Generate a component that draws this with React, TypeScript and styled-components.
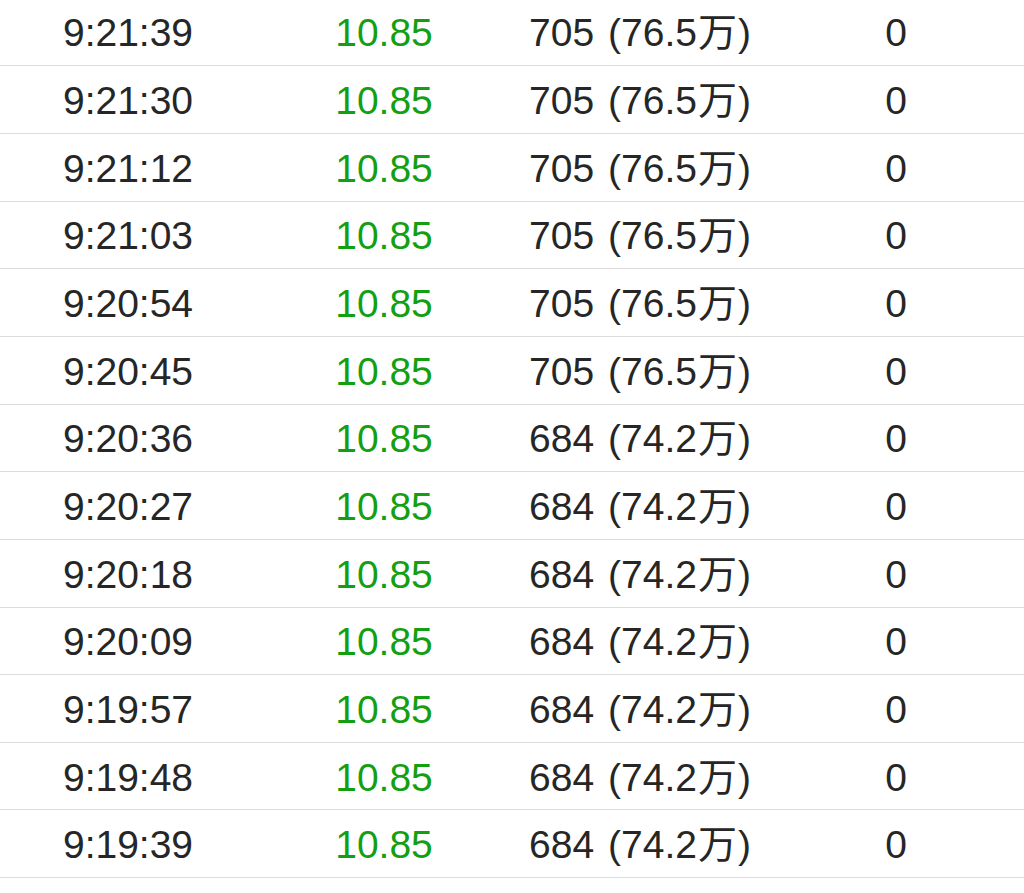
import React from "react";
import styled, { createGlobalStyle } from "styled-components";

const GlobalStyle = createGlobalStyle`
  html, body {
    margin: 0;
    padding: 0;
    background: #ffffff;
  }
  body {
    font-family: "Liberation Sans", "Noto Sans CJK SC", sans-serif;
    overflow: hidden;
  }
`;

const List = styled.div`
  display: flex;
  flex-direction: column;
  margin-top: -1.4px;
`;

const Row = styled.div`
  display: grid;
  grid-template-columns: repeat(4, 1fr);
  align-items: center;
  height: 67.67px;
  box-sizing: border-box;
  border-bottom: 1px solid #dcdcdc;
`;

const Cell = styled.div<{ $tone?: "green" | "dark" }>`
  text-align: center;
  font-size: 39px;
  line-height: 1;
  height: 39px;
  padding-top: 2px;
  color: ${(p) => (p.$tone === "green" ? "#12a012" : "#262626")};
  white-space: nowrap;
`;

const Gap = styled.span`
  display: inline-block;
  width: 14px;
`;

const Wan = styled.span`
  font-family: "Noto Sans CJK SC", sans-serif;
  font-size: 39px;
  line-height: 0;
  margin: 0 1px;
`;

type Trade = { time: string; price: string; vol: string; amt: string; flag: string };

const trades: Trade[] = [
  { time: "9:21:39", price: "10.85", vol: "705", amt: "76.5", flag: "0" },
  { time: "9:21:30", price: "10.85", vol: "705", amt: "76.5", flag: "0" },
  { time: "9:21:12", price: "10.85", vol: "705", amt: "76.5", flag: "0" },
  { time: "9:21:03", price: "10.85", vol: "705", amt: "76.5", flag: "0" },
  { time: "9:20:54", price: "10.85", vol: "705", amt: "76.5", flag: "0" },
  { time: "9:20:45", price: "10.85", vol: "705", amt: "76.5", flag: "0" },
  { time: "9:20:36", price: "10.85", vol: "684", amt: "74.2", flag: "0" },
  { time: "9:20:27", price: "10.85", vol: "684", amt: "74.2", flag: "0" },
  { time: "9:20:18", price: "10.85", vol: "684", amt: "74.2", flag: "0" },
  { time: "9:20:09", price: "10.85", vol: "684", amt: "74.2", flag: "0" },
  { time: "9:19:57", price: "10.85", vol: "684", amt: "74.2", flag: "0" },
  { time: "9:19:48", price: "10.85", vol: "684", amt: "74.2", flag: "0" },
  { time: "9:19:39", price: "10.85", vol: "684", amt: "74.2", flag: "0" },
];

export default function App() {
  return (
    <>
      <GlobalStyle />
      <List>
        {trades.map((t, i) => (
          <Row key={i}>
            <Cell>{t.time}</Cell>
            <Cell $tone="green">{t.price}</Cell>
            <Cell>
              {t.vol}
              <Gap />({t.amt}
              <Wan>万</Wan>)
            </Cell>
            <Cell>{t.flag}</Cell>
          </Row>
        ))}
      </List>
    </>
  );
}
